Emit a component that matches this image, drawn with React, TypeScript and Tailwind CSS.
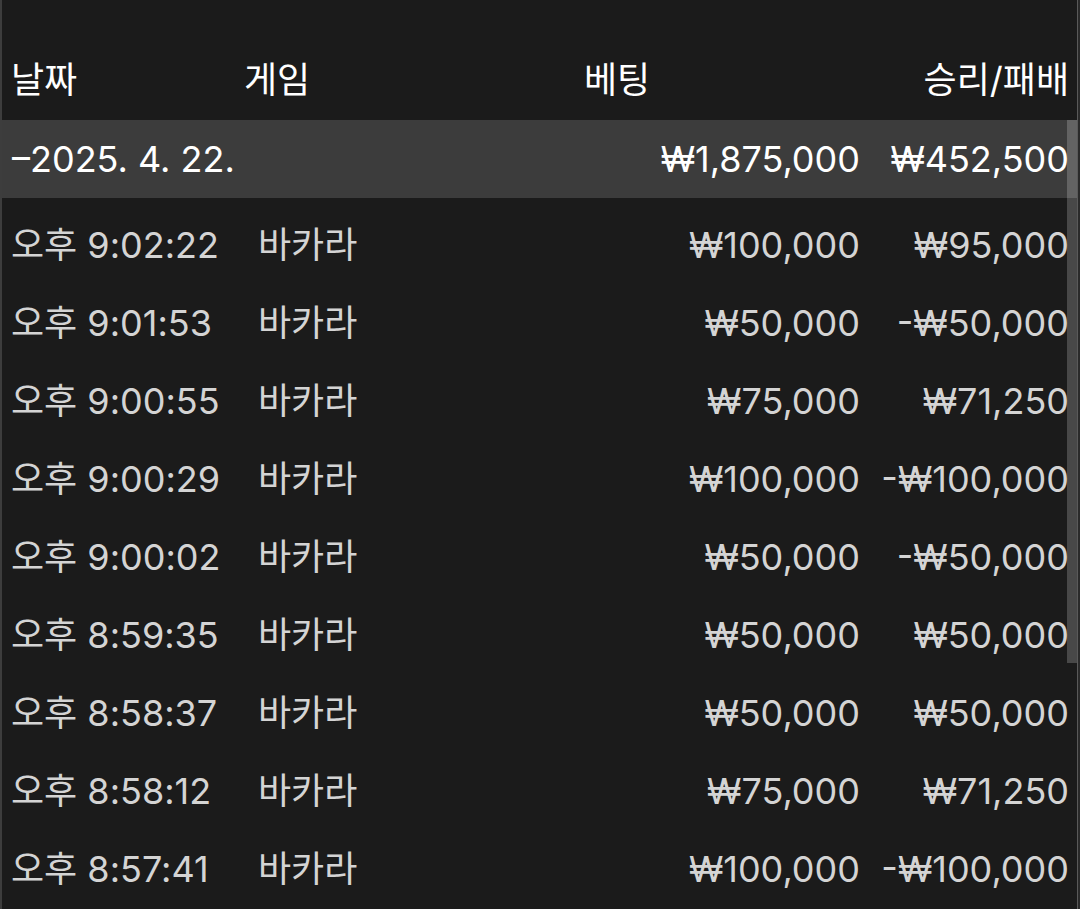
const rows = [
  { time: "오후 9:02:22", game: "바카라", bet: "₩100,000", result: "₩95,000" },
  { time: "오후 9:01:53", game: "바카라", bet: "₩50,000", result: "-₩50,000" },
  { time: "오후 9:00:55", game: "바카라", bet: "₩75,000", result: "₩71,250" },
  { time: "오후 9:00:29", game: "바카라", bet: "₩100,000", result: "-₩100,000" },
  { time: "오후 9:00:02", game: "바카라", bet: "₩50,000", result: "-₩50,000" },
  { time: "오후 8:59:35", game: "바카라", bet: "₩50,000", result: "₩50,000" },
  { time: "오후 8:58:37", game: "바카라", bet: "₩50,000", result: "₩50,000" },
  { time: "오후 8:58:12", game: "바카라", bet: "₩75,000", result: "₩71,250" },
  { time: "오후 8:57:41", game: "바카라", bet: "₩100,000", result: "-₩100,000" },
]

export default function App() {
  return (
    <div
      className="relative flex h-[909px] w-[1080px] overflow-hidden bg-[#1b1b1b] text-[36px] leading-[44px]"
      style={{ fontFamily: '"Inter", "Noto Sans CJK KR", sans-serif' }}
    >
      <div className="w-[2px] shrink-0 bg-[#3d3d3d]" />
      <div className="flex min-w-0 flex-1 flex-col">
        {/* header */}
        <div className="flex h-[120px] shrink-0 items-center pt-[40px] text-white">
          <div className="w-[242px] shrink-0 pl-[9px]">날짜</div>
          <div className="w-[340px] shrink-0">게임</div>
          <div className="flex-1">베팅</div>
          <div className="shrink-0 pr-[8px]">승리/패배</div>
        </div>

        {/* group row */}
        <div className="mb-[8px] flex h-[78px] shrink-0 items-center bg-[#3c3c3c] text-white">
          <div className="w-[256px] shrink-0 pl-[10px]">–2025. 4. 22.</div>
          <div className="flex-1" />
          <div className="w-[300px] shrink-0 text-right">₩1,875,000</div>
          <div className="w-[217px] shrink-0 pr-[8px] text-right">₩452,500</div>
        </div>

        {rows.map((r) => (
          <div key={r.time} className="flex h-[78px] shrink-0 items-center text-[#d4d4d4]">
            <div className="w-[256px] shrink-0 pl-[9px]">{r.time}</div>
            <div className="flex-1">{r.game}</div>
            <div className="w-[300px] shrink-0 text-right">{r.bet}</div>
            <div className="w-[217px] shrink-0 pr-[8px] text-right">{r.result}</div>
          </div>
        ))}
      </div>
      <div className="flex w-[3px] shrink-0">
        <div className="w-[1px] bg-[#5a5a5a]" />
        <div className="flex-1 bg-[#2a2a2a]" />
      </div>

      {/* scrollbar thumb */}
      <div className="absolute right-[3px] top-[120px] h-[543px] w-[10px] bg-white/20" />
    </div>
  )
}
